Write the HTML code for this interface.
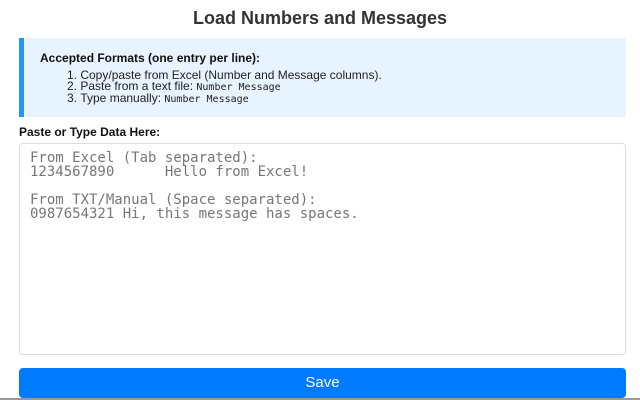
<!DOCTYPE html>
<html><head><style>
*{margin:0;padding:0;box-sizing:border-box}
body{width:640px;height:400px;background:#fff;font-family:"Liberation Sans",sans-serif;color:#333;position:relative;overflow:hidden}
h1{position:absolute;top:8px;left:0;width:640px;text-align:center;font-size:18px;font-weight:bold;color:#333}
.info{position:absolute;left:19px;top:38px;width:607px;height:79px;background:#e7f3fe;border-left:5px solid #2196f3}
.info b{position:absolute;left:16px;top:13px;font-size:12px;color:#111}
.info ol{position:absolute;left:43px;top:32px;font-size:12px;line-height:10.5px;color:#222;list-style-position:inside;white-space:nowrap}
code{font-family:"DejaVu Sans Mono",monospace;font-size:10px}
.lbl{position:absolute;left:19px;top:125px;font-size:12px;font-weight:bold;color:#111}
.ta{position:absolute;left:19px;top:143px;width:607px;height:212px;border:1px solid #ddd;border-radius:4px;padding:7px 10px;font-family:"DejaVu Sans Mono",monospace;font-size:14px;line-height:14px;color:#777;white-space:pre}
.btn{position:absolute;left:19px;top:368px;width:607px;height:30px;background:#007bff;border-radius:4px;color:#fff;text-align:center;font-size:15px;line-height:30px}
.bar{position:absolute;left:0;top:398px;width:640px;height:2px;background:#999}
</style></head><body>
<h1>Load Numbers and Messages</h1>
<div class="info"><b>Accepted Formats (one entry per line):</b>
<ol><li>Copy/paste from Excel (Number and Message columns).</li><li>Paste from a text file: <code>Number Message</code></li><li>Type manually: <code>Number Message</code></li></ol></div>
<div class="lbl">Paste or Type Data Here:</div>
<div class="ta">From Excel (Tab separated):
1234567890      Hello from Excel!

From TXT/Manual (Space separated):
0987654321 Hi, this message has spaces.</div>
<div class="btn">Save</div>
<div class="bar"></div>
</body></html>
